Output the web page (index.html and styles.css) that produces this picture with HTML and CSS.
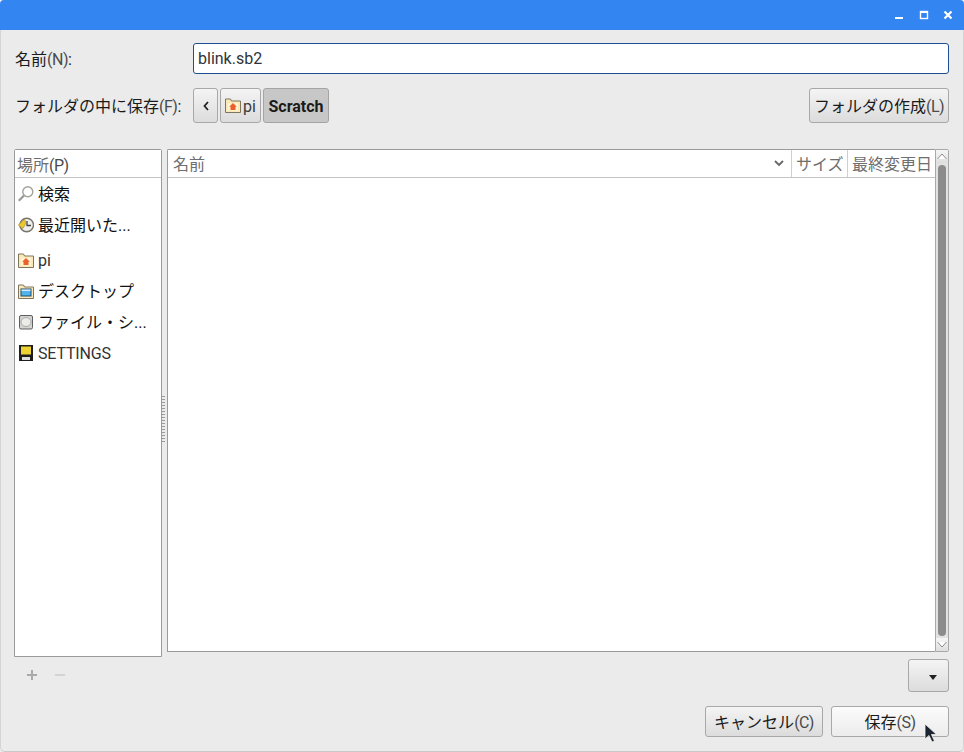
FILE: index.html
```html
<!DOCTYPE html>
<html lang="ja">
<head>
<meta charset="utf-8">
<title>保存</title>
<link rel="stylesheet" href="styles.css">
</head>
<body>
<div class="window">
  <header class="titlebar">
    <svg class="tb-icon" width="12" height="12" viewBox="0 0 12 12"><rect x="1" y="8" width="8" height="2" fill="#fff"/></svg>
    <svg class="tb-icon" width="12" height="12" viewBox="0 0 12 12"><rect x="2.500" y="2.500" width="7" height="7" fill="none" stroke="#fff" stroke-width="1.400"/><rect x="2" y="2" width="8" height="2" fill="#fff"/></svg>
    <svg class="tb-icon" width="12" height="12" viewBox="0 0 12 12"><path d="M2.500 2.500l7 7M9.500 2.500l-7 7" stroke="#fff" stroke-width="2.200"/></svg>
  </header>
  <main class="content">
    <div class="name-row">
      <label class="label">名前<span class="mn">(N)</span>:</label>
      <div class="entry">blink.sb2</div>
    </div>
    <div class="path-row">
      <span class="label">フォルダの中に保存<span class="mn">(F)</span>:</span>
      <div class="crumbs">
        <button class="btn back"><svg width="8" height="12" viewBox="0 0 8 12"><path d="M6 2L2.500 6 6 10" fill="none" stroke="#222" stroke-width="1.800"/></svg></button>
        <button class="btn crumb-pi">
          <svg class="ico" width="16" height="15" viewBox="0 0 16 15"><path d="M.5 14.500V1h5l1 2h9v11.500z" fill="#fde9b8" stroke="#7d765c"/><rect x="3" y="5" width="10" height="7.500" fill="#fff3d6"/><path d="M8 5l3.800 3.700h-1.300V12h-5V8.700H4.200z" fill="#e9602a"/></svg><span>pi</span>
        </button>
        <button class="btn active">Scratch</button>
      </div>
      <button class="btn create">フォルダの作成<span class="mn">(L)</span></button>
    </div>
    <div class="panes">
      <aside class="places">
        <div class="col-head places-head">場所<span class="mn">(P)</span></div>
        <ul class="place-list">
          <li class="place"><svg class="ico" width="16" height="16" viewBox="0 0 16 16"><circle cx="9.800" cy="5.800" r="5" fill="#fff" stroke="#a3a39c" stroke-width="1.400"/><path d="M6 9.500L.8 14.800" stroke="#9a9a94" stroke-width="2.200"/></svg>検索</li>
          <li class="place"><svg class="ico" width="16" height="16" viewBox="0 0 16 16"><circle cx="8.700" cy="8" r="6.800" fill="#eee" stroke="#77756a" stroke-width="1.400"/><path d="M9 4v4.500h4" fill="none" stroke="#444" stroke-width="1.300"/><path d="M.3 8L6.500 2.500l1.500 3.500-3 5.500z" fill="#ecc82e" stroke="#a8881a" stroke-width=".6"/></svg>最近開いた...</li>
          <li class="place gap-top"><svg class="ico" width="16" height="15" viewBox="0 0 16 15"><path d="M.5 14.500V1h5l1 2h9v11.500z" fill="#fde9b8" stroke="#7d765c"/><rect x="3" y="5" width="10" height="7.500" fill="#fff3d6"/><path d="M8 5l3.800 3.700h-1.300V12h-5V8.700H4.200z" fill="#e9602a"/></svg><span class="thin">pi</span></li>
          <li class="place"><svg class="ico" width="16" height="15" viewBox="0 0 16 15"><path d="M.5 14.500V1h5l1 2h9v11.500z" fill="#fde9b8" stroke="#7d765c"/><rect x="3" y="5" width="10" height="7" fill="#4fb4ee" stroke="#1c4a6e"/><rect x="3.500" y="5.500" width="9" height="1.500" fill="#dceaf4"/></svg>デスクトップ</li>
          <li class="place"><svg class="ico" width="16" height="16" viewBox="0 0 16 16"><rect x="1.500" y="1.500" width="13" height="13.500" rx="1.500" fill="#d4d4d0" stroke="#5e5e5e"/><ellipse cx="8" cy="8" rx="5" ry="4.500" fill="#ecece8" stroke="#aaa"/></svg>ファイル・シ...</li>
          <li class="place"><svg class="ico" width="16" height="16" viewBox="0 0 16 16"><rect x="1" y="0" width="14" height="16" fill="#1d1d1b"/><rect x="3" y="1.500" width="10" height="8" fill="#ecd332"/><rect x="4" y="12" width="8" height="3" fill="#ddd"/></svg><span class="thin settings">SETTINGS</span></li>
        </ul>
        <div class="grip"></div>
      </aside>
      <section class="files">
        <div class="file-head">
          <div class="col-head col-name">名前<svg class="chev" width="10" height="7" viewBox="0 0 10 7"><path d="M1 1l4 4 4-4" fill="none" stroke="#666" stroke-width="1.800"/></svg></div>
          <div class="col-head col-size">サイズ</div>
          <div class="col-head col-date">最終変更日</div>
        </div>
        <div class="file-body"></div>
      </section>
      <div class="scrollbar">
        <div class="arrow"><svg width="10" height="7" viewBox="0 0 10 7"><path d="M.5 6L5 1l4.500 5" fill="#fff" stroke="#8a8a8a"/></svg></div>
        <div class="track"><div class="thumb"></div></div>
        <div class="arrow"><svg width="10" height="7" viewBox="0 0 10 7"><path d="M.5 1L5 6l4.500-5" fill="#fff" stroke="#8a8a8a"/></svg></div>
      </div>
    </div>
    <div class="tools-row">
      <div class="tools">
        <svg width="12" height="12" viewBox="0 0 12 12"><path d="M6 1v10M1 6h10" stroke="#aaa" stroke-width="2"/></svg>
        <svg width="12" height="12" viewBox="0 0 12 12"><path d="M1 6h10" stroke="#d4d4d4" stroke-width="2"/></svg>
      </div>
      <button class="btn drop"><svg width="10" height="5" viewBox="0 0 10 5"><path d="M1 0h8L5 5z" fill="#222"/></svg></button>
    </div>
    <div class="actions">
      <button class="btn action">キャンセル<span class="mn">(C)</span></button>
      <button class="btn action save">保存<span class="mn">(S)</span></button>
    </div>
  </main>
  <svg class="cursor" width="14" height="21" viewBox="0 0 14 21"><path d="M1 1v15l4-3.500 3 6.500 2.500-1-3-6.500h5z" fill="#1c2430" stroke="#f4f4f4" stroke-width=".8"/></svg>
</div>
</body>
</html>
```
FILE: styles.css
```css
* { box-sizing: border-box; }
html, body { margin: 0; height: 100%; background: #fff; }
body { font: 16px/20px Roboto, "Noto Sans CJK JP", sans-serif; color: #1a1a1a; }
.window { position: relative; width: 964px; height: 752px; display: flex; flex-direction: column; overflow: hidden; border-radius: 4px 4px 0 0; background: #ebebeb; }
.titlebar { height: 30px; flex: none; background: #3385f2; display: flex; justify-content: flex-end; align-items: center; gap: 12px; padding: 0 10px 0 0; }
.tb-icon { display: block; }
.content { flex: 1; display: flex; flex-direction: column; padding: 13px 15px 14px 13px; border-left: 1px solid #d4d4d4; border-bottom: 1px solid #c8c8c8; border-right: 1px solid #d4d4d4; border-radius: 0 0 5px 5px; }
.label { white-space: nowrap; padding: 2px 0 0 1px; }
.mn { color: #4a4a4a; letter-spacing: -.5px; }
.name-row { display: flex; align-items: center; height: 31px; }
.name-row .label { width: 179px; }
.entry { flex: 1; height: 31px; background: #fff; border: 1px solid #1c4f94; border-radius: 3px; padding: 5px 4px 3px; color: #30343a; margin-right: -1px; }
.path-row { display: flex; align-items: center; height: 35px; margin-top: 14px; }
.path-row .label { width: 179px; }
.crumbs { display: flex; gap: 2px; flex: 1; }
.btn { font: inherit; color: #1a1a1a; height: 35px; padding: 2px 0 0; border: 1px solid #a8a8a8; border-radius: 3px; background: linear-gradient(#f4f4f4, #dcdcdc); display: flex; align-items: center; justify-content: center; }
.back { width: 25px; padding: 0; }
.crumb-pi { width: 41px; gap: 2px; }
.crumb-pi span { color: #3a3a3a; }
.active { width: 66px; font-weight: 700; background: #c7c7c7; border-color: #a4a4a4; }
.create { width: 140px; margin-right: -1px; white-space: nowrap; }
.panes { display: flex; height: 508px; margin-top: 26px; }
.places { position: relative; width: 148px; height: 508px; background: #fff; border: 1px solid #9a9a9a; border-radius: 2px 2px 0 0; flex: none; }
.col-head { color: #6e6e6e; background: #fff; white-space: nowrap; }
.places-head { height: 28px; padding: 6px 2px 4px; border-bottom: 1px solid #c4c4c4; }
.place-list { list-style: none; margin: 0; padding: 0; }
.place { height: 31px; padding-top: 3px; display: flex; align-items: center; padding-left: 3px; gap: 4px; white-space: nowrap; color: #111; }
.gap-top { margin-top: 4px; }
.thin { color: #333; }
.settings { letter-spacing: -.15px; }
.ico { flex: none; margin-bottom: 2px; }
.grip { position: absolute; left: 147px; top: 246px; width: 3px; height: 46px; background: repeating-linear-gradient(#9a9a9a 0 1px, transparent 1px 3px); }
.files { width: 768px; height: 503px; margin-left: 5px; flex: none; background: #fff; border: 1px solid #9a9a9a; border-right: 0; border-radius: 2px 0 0 0; display: flex; flex-direction: column; }
.file-head { height: 28px; display: flex; flex: none; border-bottom: 1px solid #c4c4c4; }
.col-name { flex: 1; padding: 5px 7px 3px 5px; display: flex; justify-content: space-between; align-items: center; }
.chev { margin-bottom: 2px; }
.col-size { width: 56px; padding: 5px 4px 3px; border-left: 1px solid #d0d0d0; }
.col-date { width: 88px; padding: 5px 4px 3px; border-left: 1px solid #d0d0d0; }
.file-body { flex: 1; }
.scrollbar { width: 14px; height: 503px; flex: none; border: 1px solid #a8a8a8; border-radius: 0 2px 2px 0; background: #e2e2e2; display: flex; flex-direction: column; }
.arrow { height: 13px; display: flex; align-items: center; justify-content: center; background: linear-gradient(#f6f6f6, #dedede); flex: none; }
.track { flex: 1; padding: 2px 2px; }
.thumb { height: 100%; width: 8px; background: #8c8c8c; border-radius: 4px; }
.tools-row { display: flex; justify-content: space-between; align-items: flex-start; height: 33px; margin-top: 2px; margin-right: -1px; }
.tools { display: flex; gap: 16px; padding: 10px 0 0 12px; }
.tools svg { display: block; }
.drop { width: 41px; height: 33px; padding: 3px 0 0 9px; }
.actions { display: flex; justify-content: flex-end; gap: 8px; margin-top: 14px; margin-right: -1px; }
.action { width: 118px; height: 31px; white-space: nowrap; }
.save { background: linear-gradient(#fbfbfb, #ececec); }
.cursor { position: absolute; left: 924px; top: 723px; }
```
